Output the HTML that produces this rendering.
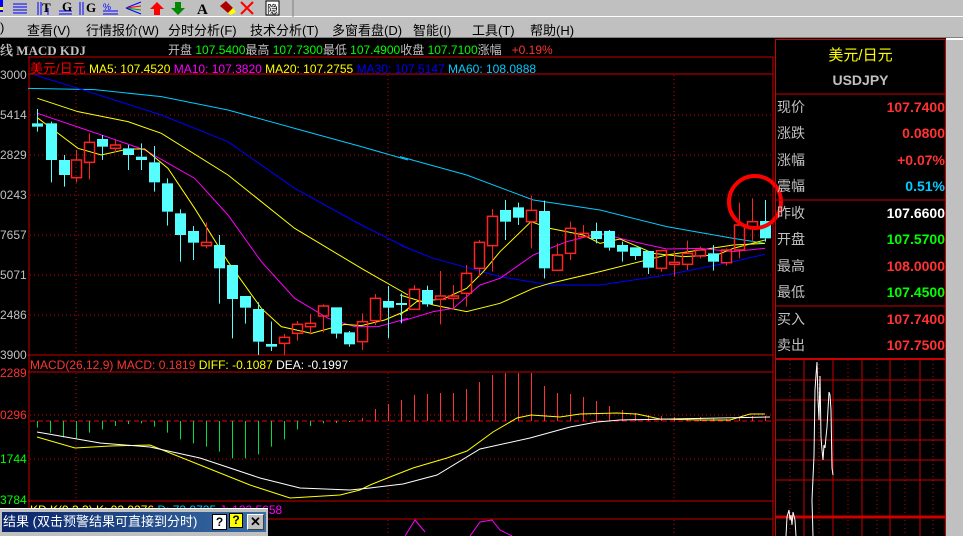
<!DOCTYPE html>
<html><head><meta charset="utf-8">
<style>
*{margin:0;padding:0;box-sizing:border-box}
body{width:963px;height:536px;overflow:hidden;background:#000;font-family:"Liberation Sans","Noto Sans CJK SC",sans-serif;position:relative}
.abs{position:absolute;white-space:nowrap}
#tb{left:0;top:0;width:963px;height:17px;background:#c0c0c0;border-bottom:1px solid #fff}
#mb{left:0;top:17px;width:963px;height:21px;background:#c0c0c0;font-size:13px;color:#000;border-bottom:1px solid #808080}
#mb span{position:absolute;top:3px}
.t{font-size:12px}
.rp{font-size:14px;color:#c0c0c0}
.rv{font-size:14px;right:18px;text-align:right;font-weight:bold}
</style></head><body>
<div id="tb" class="abs">
<svg width="300" height="17" style="position:absolute;left:0;top:0">
<rect x="0" y="0" width="3" height="12" fill="#00f"/><rect x="0" y="7" width="3" height="3" fill="#ff0"/>
<g stroke="#00f" stroke-width="1"><line x1="13" y1="4" x2="27" y2="4"/><line x1="13" y1="7" x2="27" y2="7"/><line x1="13" y1="10" x2="27" y2="10"/><line x1="13" y1="13" x2="27" y2="13"/>
<line x1="38" y1="2" x2="38" y2="15"/><line x1="41" y1="2" x2="41" y2="15"/><line x1="48" y1="8" x2="48" y2="15"/>
<line x1="59" y1="11" x2="72" y2="11"/><line x1="59" y1="14" x2="72" y2="14"/><line x1="80" y1="2" x2="80" y2="15"/><line x1="83" y1="2" x2="83" y2="15"/>
<line x1="103" y1="11" x2="118" y2="11"/><line x1="103" y1="14" x2="118" y2="14"/></g>
<text x="42" y="12" font-size="13" font-weight="bold" font-family="Liberation Serif">T</text>
<text x="62" y="11" font-size="13" font-weight="bold" font-family="Liberation Serif">G</text>
<text x="86" y="12" font-size="13" font-weight="bold" font-family="Liberation Serif">G</text>
<text x="103" y="10" font-size="9" fill="#00f">%</text>
<g stroke-width="1"><line x1="126" y1="8" x2="141" y2="2" stroke="#00f"/><line x1="126" y1="8" x2="141" y2="6" stroke="#f00"/><line x1="126" y1="8" x2="141" y2="10" stroke="#0a0"/><line x1="126" y1="8" x2="141" y2="14" stroke="#00f"/></g>
<path d="M157 2 L164 9 L160 9 L160 15 L154 15 L154 9 L150 9Z" fill="#f00"/>
<path d="M178 15 L185 8 L181 8 L181 2 L175 2 L175 8 L171 8Z" fill="#080"/>
<text x="197" y="14" font-size="15" font-weight="bold" font-family="Liberation Serif">A</text>
<path d="M220 6 L226 1 L233 8 L228 13Z" fill="#a00"/><path d="M228 13 L233 8 L236 12 L231 15Z" fill="#ff0"/>
<path d="M241 2 L253 14 M253 2 L241 14" stroke="#f00" stroke-width="2"/>
<rect x="266" y="1" width="13" height="14" fill="#fff" stroke="#000"/><text x="267" y="13" font-size="11">隐</text>
<line x1="293" y1="0" x2="293" y2="17" stroke="#808080"/>
</svg></div>
<div id="mb" class="abs">
<span style="left:0">)</span><span style="left:27px">查看(V)</span><span style="left:86px">行情报价(W)</span><span style="left:168px">分时分析(F)</span><span style="left:250px">技术分析(T)</span><span style="left:332px">多窗看盘(D)</span><span style="left:413px">智能(I)</span><span style="left:472px">工具(T)</span><span style="left:530px">帮助(H)</span>
</div>
<div class="abs t" style="left:0;top:40px;color:#c0c0c0;font-weight:bold;font-size:13px;font-family:'Liberation Serif','Noto Serif CJK SC',serif">线 MACD KDJ</div>
<div class="abs t" style="left:168px;top:41px;color:#c0c0c0">开盘 <span style="color:#0f0">107.5400</span>最高 <span style="color:#0f0">107.7300</span>最低 <span style="color:#0f0">107.4900</span>收盘 <span style="color:#0f0">107.7100</span>涨幅 &nbsp; <span style="color:#f33">+0.19%</span></div>
<div class="abs t" style="left:30px;top:58px"><span style="color:#f00;font-size:13px">美元/日元</span> <span style="color:#ff0">MA5: 107.4520</span> <span style="color:#f0f">MA10: 107.3820</span> <span style="color:#ff0">MA20: 107.2755</span> <span style="color:#00f">MA30: 107.5147</span> <span style="color:#0cf">MA60: 108.0888</span></div>
<div class="abs t" style="left:30px;top:358px"><span style="color:#f33">MACD(26,12,9) MACD: 0.1819</span> <span style="color:#ff0">DIFF: -0.1087</span> <span style="color:#fff">DEA: -0.1997</span></div>
<div class="abs t" style="left:30px;top:503px"><span style="color:#ff0">KD K(9,3,3) K: 93.9276</span> <span style="color:#0cf">D: 73.9735</span> <span style="color:#f0f">J: 133.5658</span></div>
<div class="abs t" style="left:0;top:55px;color:#c0c0c0;line-height:40px">3000<br>5414<br>2829<br>0243<br>7657<br>5071<br>2486<br>3900</div>
<div class="abs t" style="left:0;top:366px;color:#f33">2289</div>
<div class="abs t" style="left:0;top:408px;color:#f33">0296</div>
<div class="abs t" style="left:0;top:452px;color:#0f0">1744</div>
<div class="abs t" style="left:0;top:493px;color:#0f0">3784</div>
<svg id="ch" width="963" height="536" style="position:absolute;left:0;top:0"></svg>
<div class="abs" style="left:946px;top:38px;width:17px;height:498px;background:#c0c0c0;border-top:2px solid #fff"></div>
<div class="abs" style="left:775px;top:39px;width:171px;height:497px;border:1px solid #c00;border-bottom:none"></div>
<div class="abs" style="left:775px;top:44px;width:171px;text-align:center;color:#ff0;font-size:15px">美元/日元</div>
<div class="abs" style="left:775px;top:72px;width:171px;text-align:center;color:#c0c0c0;font-size:14px;font-weight:bold">USDJPY</div>
<div class="abs rp" style="left:777px;top:94px;line-height:26.3px">现价<br>涨跌<br>涨幅<br>震幅</div>
<div class="abs rp" style="left:777px;top:200px;line-height:26.3px">昨收<br>开盘<br>最高<br>最低</div>
<div class="abs rp" style="left:777px;top:306px;line-height:26.3px">买入<br>卖出</div>
<div class="abs rv" style="top:94px;line-height:26.3px;color:#f33">107.7400<br>0.0800<br>+0.07%<br><span style="color:#0cf">0.51%</span></div>
<div class="abs rv" style="top:200px;line-height:26.3px;color:#fff">107.6600<br><span style="color:#0f0">107.5700</span><br><span style="color:#f33">108.0000</span><br><span style="color:#0f0">107.4500</span></div>
<div class="abs rv" style="top:306px;line-height:26.3px;color:#f33">107.7400<br>107.7500</div>
<div class="abs" style="left:0;top:508px;width:268px;height:28px;background:#c0c0c0;border-top:1px solid #fff"></div>
<div class="abs" style="left:2px;top:512px;width:264px;height:20px;background:linear-gradient(90deg,#0a246a,#3a6ea5);color:#fff;font-size:13px;padding-left:1px;line-height:20px">结果 (双击预警结果可直接到分时)</div>
<div class="abs" style="left:212px;top:514px;width:15px;height:16px;background:#fff;border:1px solid #000;font-size:12px;font-weight:bold;text-align:center;line-height:14px">?</div>
<div class="abs" style="left:229px;top:513px;width:14px;height:15px;background:#ff0;border:1px solid #000;font-size:12px;font-weight:bold;text-align:center;line-height:13px">?</div>
<div class="abs" style="left:247px;top:514px;width:17px;height:16px;background:#c0c0c0;border:1px solid;border-color:#fff #404040 #404040 #fff;font-size:13px;font-weight:bold;text-align:center;line-height:14px">✕</div>
<script>
var s='';
function L(x1,y1,x2,y2,c,w,d){s+='<line x1="'+x1+'" y1="'+y1+'" x2="'+x2+'" y2="'+y2+'" stroke="'+c+'" stroke-width="'+(w||1)+'"'+(d?' stroke-dasharray="'+d+'"':'')+'/>';}
L(28,57,773,57,'#c00');L(28,74,773,74,'#c00');L(29,57,29,536,'#c00');L(773,57,773,536,'#c00');
L(28,355,773,355,'#c00');L(28,372,773,372,'#c00');L(28,501,773,501,'#c00');L(28,519,773,519,'#c00');
[115,155,195,235,275,315].forEach(function(y){L(30,y,773,y,'#c00',1,'1 3');});
[76,388,674].forEach(function(x){L(x,75,x,355,'#c00',1,'1 3');L(x,373,x,501,'#c00',1,'1 3');L(x,520,x,536,'#c00',1,'1 3');});
L(30,415,773,415,'#c00',1,'1 3');L(30,459,773,459,'#c00',1,'1 3');
L(30,421,773,421,'#e00',1,'5 3');
function P(pts,ox,c){var a=pts.map(function(p){return (ox+p[0]/3)+','+(75+p[1]/3)}).join(' ');s+='<polyline points="'+a+'" fill="none" stroke="'+c+'" stroke-width="1"/>';}
function Q(pts,c){s+='<polyline points="'+pts.map(function(p){return p.join(',')}).join(' ')+'" fill="none" stroke="'+c+'" stroke-width="1"/>';}
P([[0,40],[200,44],[400,65],[600,105],[800,160],[1000,215],[1140,255]],28,'#0cf');
P([[0,245],[200,300],[400,375],[600,405],[800,455],[1000,490],[1095,505]],400,'#0cf');
P([[20,0],[150,40],[400,120],[600,200],[800,340],[1000,450],[1140,520]],28,'#00f');
P([[0,510],[100,550],[300,605],[450,630],[600,630],[800,600],[1000,560],[1095,538]],400,'#00f');
P([[28,70],[150,110],[300,140],[400,175],[600,300],[800,460],[1000,580],[1140,660]],28,'#ff0');
P([[0,660],[100,690],[200,710],[300,685],[400,640],[450,625],[600,590],[800,540],[1000,510],[1095,505]],400,'#ff0');
P([[28,115],[250,190],[350,225],[500,310],[600,420],[700,560],[800,670],[900,730],[980,755],[1050,755],[1140,730]],28,'#f0f');
P([[0,740],[100,710],[160,700],[240,630],[300,610],[400,540],[500,500],[600,475],[700,500],[800,522],[900,520],[1000,530],[1095,520]],400,'#f0f');
P([[28,128],[150,220],[220,240],[300,222],[350,222],[420,280],[500,400],[600,560],[700,700],[760,755],[850,775],[950,748],[1000,752],[1070,735],[1140,705]],28,'#ff0');
P([[0,720],[50,680],[130,672],[200,640],[250,590],[300,530],[393,440],[450,460],[550,480],[600,505],[660,492],[760,535],[850,545],[950,540],[1000,520],[1095,495]],400,'#ff0');
var A=[[28,145,155,102,170,0],[68,145,255,140,322,0],[107,255,300,240,335,0],[145,255,308,225,322,1],[184,202,262,175,313,1],[223,192,215,180,255,0],[262,210,220,195,232,1],[301,220,240,210,285,0],[340,245,255,205,285,0],[379,262,322,213,350,0],[418,325,410,310,452,0],[457,415,480,403,560,0],[496,468,503,453,555,0],[535,502,512,442,520,1],[574,510,580,480,686,0],[613,570,672,570,790,0],[652,663,698,663,746,0],[691,702,800,682,840,0],[730,807,815,740,828,0],[769,787,805,777,840,1],[808,748,775,738,797,1],[847,745,755,717,778,1],[886,693,723,688,772,1],[925,697,776,697,790,0],[964,772,808,768,815,0],[1003,740,800,715,825,1],[1042,670,737,657,750,1],[1081,678,698,633,790,0],[1120,684,690,655,745,0]];
var B=[[42,643,703,630,705,1],[81,645,688,632,695,0],[120,663,673,588,748,1],[159,663,670,630,703,1],[198,595,655,570,695,1],[237,502,580,495,605,1],[276,424,512,402,590,1],[315,405,440,375,495,0],[354,397,428,383,450,0],[393,406,440,362,520,1],[432,408,580,377,610,0],[471,540,586,505,587,1],[510,460,535,440,555,1],[549,475,485,450,487,1],[588,468,492,443,505,0],[627,468,518,465,527,0],[666,510,530,500,560,0],[705,517,543,517,555,0],[744,528,578,528,597,0],[783,527,580,527,590,1],[822,562,568,528,605,1],[861,535,568,497,585,1],[900,525,543,515,550,1],[939,535,560,510,587,0],[978,525,563,520,572,1],[1017,450,525,383,550,1],[1056,440,457,370,500,1],[1095,438,490,375,500,0]];
function C(arr,ox){arr.forEach(function(c){var x=Math.round(ox+c[0]/3),bt=75+c[1]/3,bb=75+c[2]/3,wt=75+c[3]/3,wb=75+c[4]/3;
var col=c[5]?'#f22':'#5ff';
L(x+0.5,wt,x+0.5,bt,col);L(x+0.5,bb,x+0.5,wb,col);
if(c[5])s+='<rect x="'+(x-4.5)+'" y="'+bt+'" width="10" height="'+Math.max(bb-bt,2)+'" fill="none" stroke="'+col+'" stroke-width="1.5"/>';
else s+='<rect x="'+(x-5)+'" y="'+bt+'" width="11" height="'+Math.max(bb-bt,2)+'" fill="'+col+'"/>';});}
C(A,28);C(B,400);
var g=[233,248,262,265,248,238,228,222,220,230,248,268,280,290,305,325,325,313,290,268,238,228,220];
g.forEach(function(v,i){var x=37.5+i*13;L(x,421,x,350+v/3,'#0d4');});
L(336.5,421,336.5,423,'#0d4');L(349.5,421,349.5,422,'#0d4');L(362.5,421,362.5,418,'#f33');
var r=[409,404,400,395,394,393,393,389,382,375,373,373,373,386,393,394,397,401,406,410,413,415,416,417,418,417,418,419,418,416,416,415];
r.forEach(function(v,i){var x=375.5+i*13;if(x>770)return;L(x,421,x,v,'#f33');});
Q([[37,437],[75,448],[110,446],[150,445],[200,465],[250,485],[290,498],[340,495],[360,490],[370,485],[390,477],[413,468],[447,458],[467,451],[493,432],[517,418],[531,415],[560,417],[580,414],[617,413],[637,414],[660,419],[700,420],[730,420],[750,414],[765,414]],'#ff0');
Q([[37,432],[100,443],[150,447],[200,458],[260,478],[300,488],[350,490],[370,488],[403,484],[437,475],[480,449],[530,438],[570,427],[597,422],[620,420],[670,419],[770,417]],'#fff');
Q([[405,536],[415,520],[425,532]],'#f0f');Q([[470,536],[480,522],[492,520],[500,530],[512,536]],'#f0f');
s+='<circle cx="755" cy="202" r="26" fill="none" stroke="#f00" stroke-width="4"/>';
L(775,94,946,94,'#c00');L(775,200,946,200,'#c00');L(775,306,946,306,'#c00');L(775,359,946,359,'#c00',2);
[380,400,420,440,460,480,516].forEach(function(y){L(776,y,946,y,'#c00',1);});L(776,517,946,517,'#c00',3);
[804,833,862,890,920].forEach(function(x){L(x,360,x,536,'#c00');});
[790,819,848,877,905,933].forEach(function(x){L(x,360,x,536,'#c00',1,'1 3');});
Q([[813,536],[812,500],[814,456],[815,390],[816,375],[817,362],[818,400],[819,420],[820,376],[821,437],[822,450],[823,460],[824,445],[825,448],[826,437],[827,427],[829,392],[830,395],[831,410],[832,468],[833,475]],'#fff');
Q([[786,536],[787,517],[789,510],[790,520],[791,515],[792,525],[793,512],[795,520],[796,536]],'#fff');
document.getElementById('ch').innerHTML=s;
</script>
</body></html>
